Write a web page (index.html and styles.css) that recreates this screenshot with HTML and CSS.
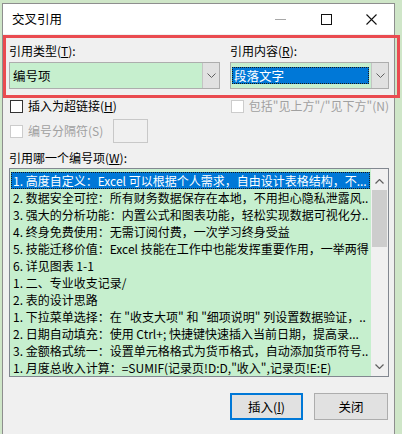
FILE: index.html
```html
<!DOCTYPE html>
<html lang="zh-CN">
<head>
  <meta charset="UTF-8">
  <meta name="viewport" content="width=device-width, initial-scale=1.0">
  <title>交叉引用</title>
  <link rel="stylesheet" href="styles.css">
</head>
<body>
  <div class="dialog">
    <div class="titlebar">
      <span class="title">交叉引用</span>
      <div class="controls">
        <span class="ctl ctl-min"><svg width="11" height="11" viewBox="0 0 11 11"><line x1="0" y1="5.5" x2="11" y2="5.5" stroke="#a8a8a8" stroke-width="1"/></svg></span>
        <span class="ctl"><svg width="11" height="11" viewBox="0 0 11 11"><rect x="0.5" y="0.5" width="10" height="10" fill="none" stroke="#111" stroke-width="1"/></svg></span>
        <span class="ctl"><svg width="11" height="11" viewBox="0 0 11 11"><path d="M0.5 0.5 L10.5 10.5 M10.5 0.5 L0.5 10.5" stroke="#111" stroke-width="1.1"/></svg></span>
      </div>
    </div>

    <div class="content">
      <div class="refs">
        <div class="col col-type">
          <div class="label">引用类型(<u>T</u>):</div>
          <div class="combo">
            <div class="combo-text">编号项</div>
            <div class="combo-btn"><svg width="9" height="5" viewBox="0 0 9 5"><polyline points="0.5,0.5 4.5,4.5 8.5,0.5" fill="none" stroke="#606060" stroke-width="1"/></svg></div>
          </div>
        </div>
        <div class="col col-content">
          <div class="label">引用内容(<u>R</u>):</div>
          <div class="combo">
            <div class="combo-text"><span class="combo-sel">段落文字</span></div>
            <div class="combo-btn"><svg width="9" height="5" viewBox="0 0 9 5"><polyline points="0.5,0.5 4.5,4.5 8.5,0.5" fill="none" stroke="#606060" stroke-width="1"/></svg></div>
          </div>
        </div>
      </div>

      <div class="row row-check">
        <div class="check-item check-link">
          <span class="box"></span>
          <span>插入为超链接(<u>H</u>)</span>
        </div>
        <div class="check-item disabled">
          <span class="box"></span>
          <span>包括"见上方"/"见下方"(N)</span>
        </div>
      </div>

      <div class="row row-sep">
        <div class="check-item disabled sep-label">
          <span class="box"></span>
          <span>编号分隔符(S)</span>
        </div>
        <span class="sep-box"></span>
      </div>

      <div class="label label-list">引用哪一个编号项(<u>W</u>):</div>
      <div class="listbox">
        <ul class="items">
          <li class="selected">1. 高度自定义：Excel 可以根据个人需求，自由设计表格结构，不...</li>
          <li>2. 数据安全可控：所有财务数据保存在本地，不用担心隐私泄露风..</li>
          <li>3. 强大的分析功能：内置公式和图表功能，轻松实现数据可视化分..</li>
          <li>4. 终身免费使用：无需订阅付费，一次学习终身受益</li>
          <li>5. 技能迁移价值：Excel 技能在工作中也能发挥重要作用，一举两得</li>
          <li>6. 详见图表 1-1</li>
          <li>1. 二、专业收支记录/</li>
          <li>2. 表的设计思路</li>
          <li>1. 下拉菜单选择：在 "收支大项" 和 "细项说明" 列设置数据验证，..</li>
          <li>2. 日期自动填充：使用 Ctrl+; 快捷键快速插入当前日期，提高录...</li>
          <li>3. 金额格式统一：设置单元格格式为货币格式，自动添加货币符号..</li>
          <li>1. 月度总收入计算：=SUMIF(记录页!D:D,"收入",记录页!E:E)</li>
        </ul>
        <div class="scrollbar">
          <div class="arrow"><svg width="9" height="5" viewBox="0 0 9 5"><polyline points="0.5,4.5 4.5,0.5 8.5,4.5" fill="none" stroke="#606060" stroke-width="1.2"/></svg></div>
          <div class="track"><div class="thumb"></div></div>
          <div class="arrow"><svg width="9" height="5" viewBox="0 0 9 5"><polyline points="0.5,0.5 4.5,4.5 8.5,0.5" fill="none" stroke="#606060" stroke-width="1.2"/></svg></div>
        </div>
      </div>

      <div class="buttons">
        <button class="btn btn-default">插入(<u>I</u>)</button>
        <button class="btn">关闭</button>
      </div>
    </div>
  </div>

  <div class="highlight-frame"></div>
</body>
</html>
```

FILE: styles.css
```css
body {
  margin: 0;
  padding: 0;
  width: 402px;
  height: 434px;
  overflow: hidden;
  background-color: #cfe6c8;
  font-family: "Noto Sans CJK SC", "Microsoft YaHei", sans-serif;
  font-size: 12px;
  color: #000;
}
u {
  text-decoration: underline;
  text-underline-offset: 1px;
}
.dialog {
  margin: 3px 0 0 2px;
  width: 391px;
  height: 431px;
  border: 1px solid #8e8e8e;
  border-bottom: none;
  background-color: #f0f0f0;
}
.titlebar {
  height: 30px;
  background-color: #fff;
  display: flex;
  align-items: center;
  padding-left: 9px;
}
.title {
  font-size: 12.5px;
  line-height: 16px;
}
.controls {
  margin-left: auto;
  display: flex;
  height: 100%;
}
.ctl {
  width: 45px;
  display: flex;
  align-items: center;
  justify-content: center;
}
.ctl-min {
  width: 47px;
}
.content {
  padding: 0 5px 0 6px;
}
.refs {
  display: flex;
  gap: 10px;
  padding-top: 9px;
}
.col-type {
  width: 211px;
}
.col-content {
  width: 159px;
}
.label {
  line-height: 16px;
  height: 16px;
  white-space: nowrap;
}
.combo {
  margin-top: 3px;
  height: 25px;
  border: 1px solid #adadad;
  background-color: #c6efce;
  display: flex;
}
.combo-text {
  flex: 1;
  display: flex;
  align-items: center;
  padding-left: 3px;
  font-size: 12.5px;
}
.col-content .combo-text {
  padding: 0 2px 0 1px;
}
.combo-sel {
  display: block;
  width: 100%;
  height: 17px;
  line-height: 17px;
  padding-left: 2px;
  box-sizing: border-box;
  background-color: #0078d7;
  color: #fff;
  outline: 1px dotted #1a1a1a;
  outline-offset: -1px;
}
.combo-btn {
  width: 16px;
  background-color: #e1e1e1;
  border-left: 1px solid #c4c4c4;
  display: flex;
  align-items: center;
  justify-content: center;
}
.row {
  display: flex;
  align-items: center;
}
.row-check {
  margin-top: 9px;
  height: 16px;
}
.check-item {
  display: flex;
  align-items: center;
  line-height: 16px;
  white-space: nowrap;
}
.check-link {
  width: 221px;
}
.box {
  flex: none;
  width: 11px;
  height: 11px;
  border: 1px solid #333;
  background-color: #fff;
  margin: 0 5px 0 1px;
}
.disabled {
  color: #a0a0a0;
}
.disabled .box {
  border-color: #cccccc;
}
.row-sep {
  margin-top: 5px;
  height: 24px;
}
.sep-label {
  width: 104px;
}
.sep-box {
  width: 33px;
  height: 22px;
  border: 1px solid #c8c8c8;
}
.label-list {
  margin-top: 7px;
}
.listbox {
  margin-top: 2px;
  height: 207px;
  border: 1px solid #828790;
  background-color: #c6efce;
  display: flex;
}
.items {
  list-style: none;
  margin: 0;
  padding: 3px 0 0 1px;
  flex: 1;
  min-width: 0;
}
.items li {
  height: 17px;
  line-height: 17px;
  padding-left: 2px;
  white-space: nowrap;
  overflow: hidden;
  font-size: 12px;
}
.items li.selected {
  background-color: #0078d7;
  color: #fff;
  outline: 1px dotted #1a1a1a;
  outline-offset: -1px;
}
.scrollbar {
  width: 17px;
  margin-left: 1px;
  background-color: #f0f0f0;
  display: flex;
  flex-direction: column;
}
.arrow {
  height: 17px;
  display: flex;
  align-items: center;
  justify-content: center;
  margin-top: 4px;
}
.arrow:last-child {
  margin-top: 0;
  margin-bottom: 1px;
}
.track {
  flex: 1;
  padding: 0 1px;
}
.thumb {
  height: 57px;
  background-color: #cdcdcd;
}
.buttons {
  display: flex;
  justify-content: flex-end;
  gap: 11px;
  margin-top: 16px;
  padding-right: 1px;
}
.btn {
  width: 74px;
  height: 27px;
  border: 1px solid #adadad;
  background-color: #e1e1e1;
  font-family: inherit;
  font-size: 12.5px;
  color: #000;
  padding: 0;
}
.btn-default {
  width: 73px;
  border: 2px solid #0078d7;
}
.highlight-frame {
  position: absolute;
  left: 3px;
  top: 35px;
  width: 391px;
  height: 57px;
  border: 3px solid #ea4b50;
}
```
